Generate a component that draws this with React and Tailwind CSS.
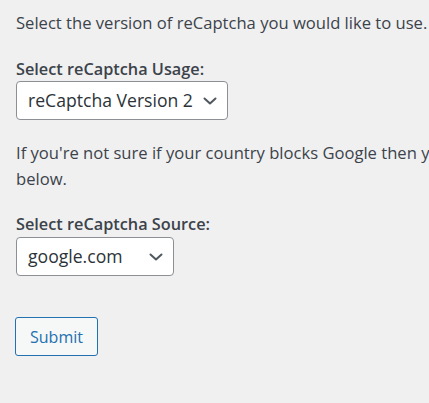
import React from "react";

function Chevron() {
  return (
    <svg width="14" height="8" viewBox="0 0 14 8" fill="none" className="shrink-0">
      <path d="M1.5 1.5 L7 6.5 L12.5 1.5" stroke="#50575e" strokeWidth="2" strokeLinecap="round" strokeLinejoin="round" />
    </svg>
  );
}

function FakeSelect({ value, width }) {
  return (
    <div
      className={`flex h-[39px] items-center justify-between rounded-[4px] border border-[#8c8f94] bg-white pl-[11px] pr-[10px] text-[17.6px] text-[#2c3338] ${width}`}
    >
      <span className="whitespace-nowrap">{value}</span>
      <Chevron />
    </div>
  );
}

export default function App() {
  return (
    <div className="min-h-screen overflow-hidden bg-[#f0f0f1] font-['Open_Sans',sans-serif] text-[#3c434a]">
      <div className="w-[800px] pl-4 pt-[10px]">
        {/* Intro */}
        <p className="text-[16.6px] leading-[26px]">
          Select the version of reCaptcha you would like to use.
        </p>

        {/* Usage */}
        <div className="mt-[21px] text-[16.3px] font-semibold leading-[24px]">
          Select reCaptcha Usage:
        </div>
        <FakeSelect value="reCaptcha Version 2" width="w-[212px]" />

        {/* Source */}
        <p className="mt-[20px] whitespace-nowrap text-[16.6px] leading-[26px]">
          If you're not sure if your country blocks Google then you should select recaptcha.net
          <br />
          below.
        </p>

        <div className="mt-[20px] text-[16.3px] font-semibold leading-[24px]">
          Select reCaptcha Source:
        </div>
        <div className="mt-px">
          <FakeSelect value="google.com" width="w-[158px]" />
        </div>

        <button className="mt-[41px] h-[39px] -ml-px rounded-[3px] border border-[#2271b1] bg-[#f6f7f7] px-[14px] text-[16px] text-[#2271b1]">
          Submit
        </button>
      </div>
    </div>
  );
}
